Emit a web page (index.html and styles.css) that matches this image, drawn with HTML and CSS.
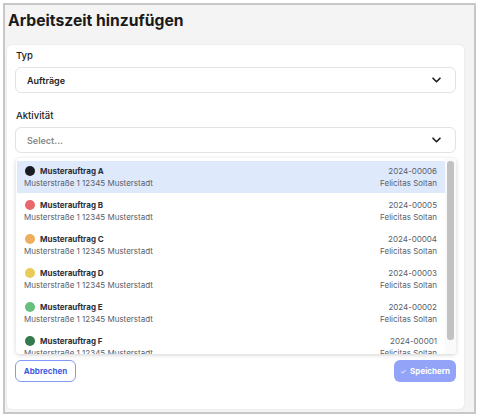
FILE: index.html
```html
<!DOCTYPE html>
<html lang="de">
<head>
<meta charset="utf-8">
<title>Arbeitszeit hinzufügen</title>
<link rel="stylesheet" href="styles.css">
</head>
<body>
<div class="frame">
  <h1 class="title">Arbeitszeit hinzufügen</h1>
  <div class="card">
    <div class="field">
      <div class="label">Typ</div>
      <div class="select">
        <span class="value">Aufträge</span>
        <svg class="chev" width="9" height="6" viewBox="0 0 9 6"><path d="M1 1.2l3.5 3.5 3.5-3.5" fill="none" stroke="#1c1c1c" stroke-width="1.6" stroke-linecap="round" stroke-linejoin="round"/></svg>
      </div>
    </div>
    <div class="field field-act">
      <div class="label">Aktivität</div>
      <div class="select">
        <span class="placeholder">Select...</span>
        <svg class="chev" width="9" height="6" viewBox="0 0 9 6"><path d="M1 1.2l3.5 3.5 3.5-3.5" fill="none" stroke="#1c1c1c" stroke-width="1.6" stroke-linecap="round" stroke-linejoin="round"/></svg>
      </div>
      <div class="menu">
        <div class="list">
          <div class="item active">
            <div class="left">
              <div class="name"><span class="dot c-black"></span>Musterauftrag A</div>
              <div class="sub">Musterstraße 1 12345 Musterstadt</div>
            </div>
            <div class="right"><div>2024-00006</div><div>Felicitas Soltan</div></div>
          </div>
          <div class="item">
            <div class="left">
              <div class="name"><span class="dot c-red"></span>Musterauftrag B</div>
              <div class="sub">Musterstraße 1 12345 Musterstadt</div>
            </div>
            <div class="right"><div>2024-00005</div><div>Felicitas Soltan</div></div>
          </div>
          <div class="item">
            <div class="left">
              <div class="name"><span class="dot c-orange"></span>Musterauftrag C</div>
              <div class="sub">Musterstraße 1 12345 Musterstadt</div>
            </div>
            <div class="right"><div>2024-00004</div><div>Felicitas Soltan</div></div>
          </div>
          <div class="item">
            <div class="left">
              <div class="name"><span class="dot c-yellow"></span>Musterauftrag D</div>
              <div class="sub">Musterstraße 1 12345 Musterstadt</div>
            </div>
            <div class="right"><div>2024-00003</div><div>Felicitas Soltan</div></div>
          </div>
          <div class="item">
            <div class="left">
              <div class="name"><span class="dot c-green"></span>Musterauftrag E</div>
              <div class="sub">Musterstraße 1 12345 Musterstadt</div>
            </div>
            <div class="right"><div>2024-00002</div><div>Felicitas Soltan</div></div>
          </div>
          <div class="item">
            <div class="left">
              <div class="name"><span class="dot c-dgreen"></span>Musterauftrag F</div>
              <div class="sub">Musterstraße 1 12345 Musterstadt</div>
            </div>
            <div class="right"><div>2024-00001</div><div>Felicitas Soltan</div></div>
          </div>
        </div>
        <div class="track"><div class="thumb"></div></div>
      </div>
    </div>
    <div class="hidden-area"></div>
    <div class="actions">
      <button class="btn btn-outline">Abbrechen</button>
      <button class="btn btn-primary"><span class="check">✓</span>Speichern</button>
    </div>
  </div>
</div>
</body>
</html>
```
FILE: styles.css
```css
* { box-sizing: border-box; }
html, body { margin: 0; padding: 0; background: #ffffff; }
body {
  padding: 3px;
  font-family: Inter, "Noto Sans", "Liberation Sans", sans-serif;
  color: #1d1f24;
}
.frame {
  width: 473px;
  height: 411px;
  border: 2px solid #c7c7c7;
  background: #f4f4f4;
  padding: 4px 0 0 2px;
}
.title {
  margin: 0 0 12px 1px;
  font-size: 15.7px;
  line-height: 24px;
  font-weight: 700;
  color: #1a1a1a;
}
.card {
  width: 457px;
  background: #ffffff;
  border-radius: 5px;
  box-shadow: 0 0 2px rgba(0,0,0,0.10);
  padding: 5px 8px 27px 8px;
}
.field { position: relative; }
.field-act { margin-top: 17px; }
.label {
  font-size: 9.5px;
  line-height: 12px;
  font-weight: 500;
  color: #222;
  padding-left: 1px;
  margin-bottom: 5px;
}
.select {
  height: 26px;
  border: 1px solid #e2e2e2;
  border-radius: 6px;
  display: flex;
  align-items: center;
  justify-content: space-between;
  padding: 0 14px 0 11px;
}
.value { font-size: 9px; font-weight: 600; color: #1d1f24; }
.placeholder { font-size: 9px; font-weight: 600; color: #8a8a8a; }
.chev { display: block; }
.menu {
  position: absolute;
  left: 1px;
  right: 0;
  top: calc(100% + 5px);
  height: 196px;
  background: #fff;
  border-radius: 4px;
  box-shadow: 0 1px 4px rgba(0,0,0,0.18);
  display: flex;
  overflow: hidden;
  z-index: 5;
}
.list {
  flex: 1;
  padding: 3px 0 0 1px;
  display: flex;
  flex-direction: column;
  gap: 2px;
  overflow: hidden;
}
.item {
  flex: none;
  height: 32px;
  display: flex;
  justify-content: space-between;
  padding: 4px 8px 0 7px;
}
.item.active { background: #dfe9fc; }
.name {
  display: flex;
  align-items: center;
  font-size: 8px;
  line-height: 12px;
  font-weight: 700;
  color: #2a2f3b;
}
.dot {
  width: 10px;
  height: 10px;
  border-radius: 50%;
  margin: 0 5px 0 1px;
  flex: none;
}
.c-black { background: #1b1c20; }
.c-red { background: #e9686a; }
.c-orange { background: #efae5c; }
.c-yellow { background: #ebcb57; }
.c-green { background: #66bf7c; }
.c-dgreen { background: #357a4d; }
.sub, .right {
  font-size: 8px;
  line-height: 12px;
  color: #5a5e68;
}
.right { text-align: right; }
.track {
  width: 11px;
  flex: none;
  padding: 3px 2px 14px 2px;
  background: #fafafa;
}
.thumb {
  height: 100%;
  background: #c2c2c2;
  border-radius: 3px;
}
.hidden-area { height: 207px; }
.actions {
  display: flex;
  justify-content: space-between;
}
.btn {
  height: 22px;
  border-radius: 6px;
  font-family: inherit;
  font-size: 8px;
  font-weight: 700;
  padding: 0;
  display: flex;
  align-items: center;
  justify-content: center;
}
.btn-outline {
  width: 61px;
  border: 1px solid #8199f7;
  background: #fff;
  color: #3e5be2;
}
.btn-primary {
  width: 62px;
  border: none;
  background: #93a4f8;
  color: #ffffff;
}
.check { font-size: 7px; margin-right: 4px; font-weight: 400; }
```
